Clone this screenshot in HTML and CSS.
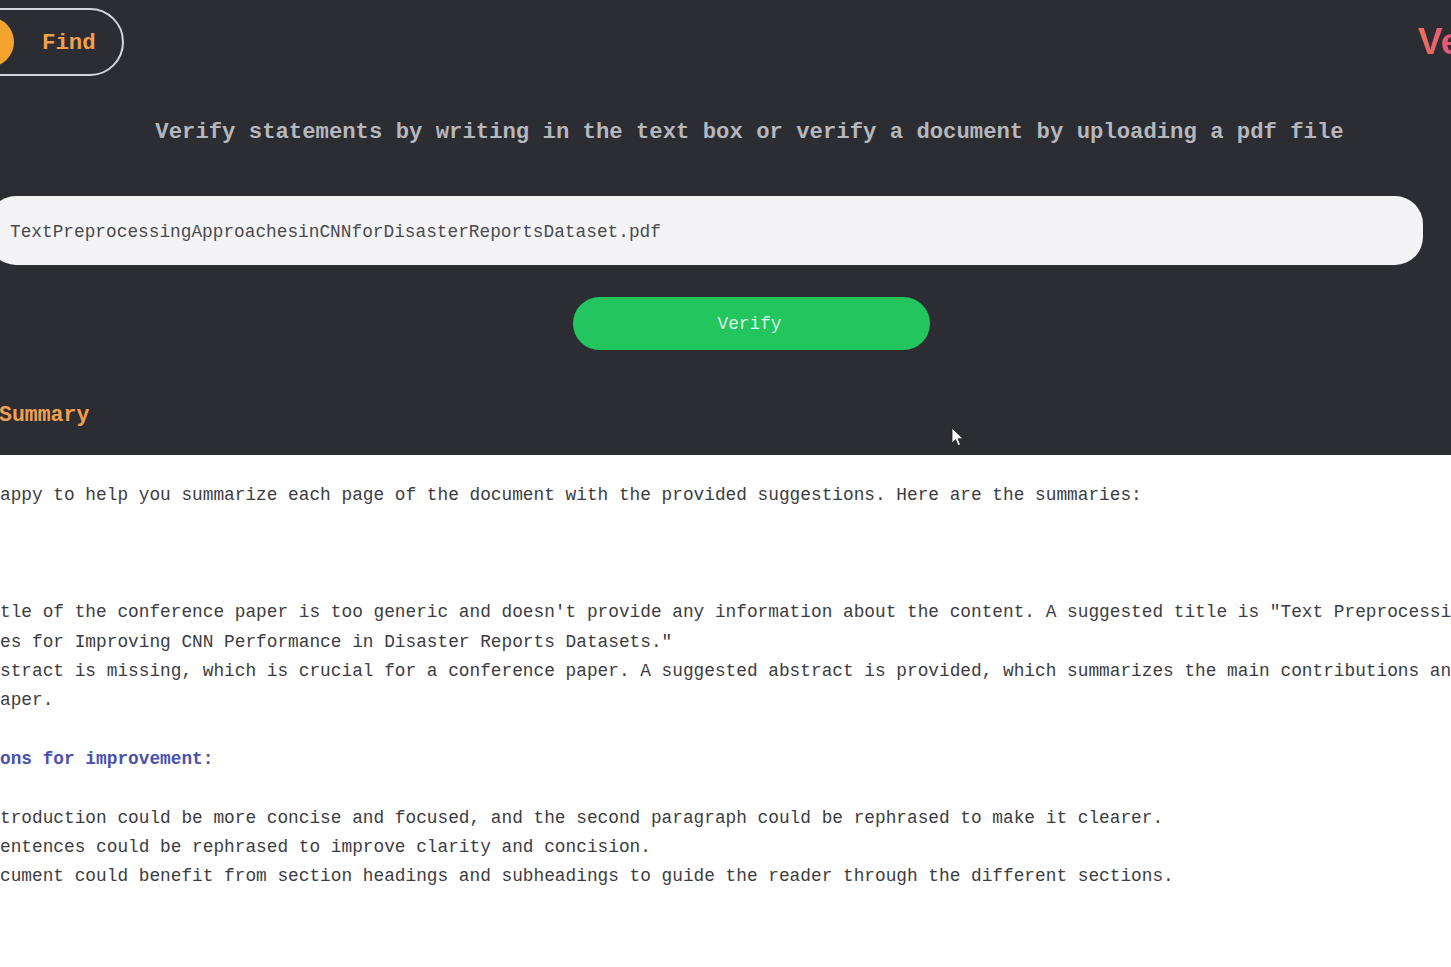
FILE: index.html
```
<!DOCTYPE html>
<html lang="en">
<head>
<meta charset="utf-8">
<title>Verify</title>
<link rel="stylesheet" href="styles.css">
</head>
<body>
<div class="page">
  <section class="dark">
    <header class="topbar">
      <div class="find-pill">
        <span class="find-dot"></span>
        <span class="find-label">Find</span>
      </div>
      <div class="brand">Ve</div>
    </header>
    <h1 class="title">Verify statements by writing in the text box or verify a document by uploading a pdf file</h1>
    <div class="file-box">TextPreprocessingApproachesinCNNforDisasterReportsDataset.pdf</div>
    <div class="action-row"><button class="verify-btn">Verify</button></div>
    <h2 class="summary-head">Summary</h2>
  </section>
  <section class="result">
    <p class="line">appy to help you summarize each page of the document with the provided suggestions. Here are the summaries:</p>
    <p class="line gap-3">tle of the conference paper is too generic and doesn't provide any information about the content. A suggested title is "Text Preprocessi</p>
    <p class="line">es for Improving CNN Performance in Disaster Reports Datasets."</p>
    <p class="line">stract is missing, which is crucial for a conference paper. A suggested abstract is provided, which summarizes the main contributions an</p>
    <p class="line">aper.</p>
    <p class="line gap-1 accent">ons for improvement:</p>
    <p class="line gap-1">troduction could be more concise and focused, and the second paragraph could be rephrased to make it clearer.</p>
    <p class="line">entences could be rephrased to improve clarity and concision.</p>
    <p class="line">cument could benefit from section headings and subheadings to guide the reader through the different sections.</p>
  </section>
  <svg class="cursor" width="14" height="20" viewBox="0 0 14 20" aria-hidden="true">
    <path d="M1 1v15l3.6-3.4 2.5 6 2.4-1-2.5-5.8H12z" fill="#fff" stroke="#222" stroke-width="0.8"/>
  </svg>
</div>
</body>
</html>
```
FILE: styles.css
```
* { box-sizing: border-box; }
html, body { margin: 0; padding: 0; }
body { background: #fff; font-family: "Liberation Mono", monospace; }
.page { position: relative; width: 1451px; height: 967px; overflow: hidden; background: #fff; }
.dark { height: 455px; background: #2c2d33; padding-top: 8px; }
.topbar { display: flex; justify-content: space-between; align-items: center; height: 68px; }
.find-pill {
  display: flex; align-items: center; gap: 28px;
  width: 164px; height: 68px; margin-left: -40px; padding-left: 2px;
  border: 2px solid #d4d4da; border-radius: 34px;
}
.find-dot { flex: none; width: 50px; height: 50px; border-radius: 50%; background: #f5a32f; }
.find-label { font-size: 22.4px; line-height: 28px; padding-top: 2px; font-weight: 700; color: #f3a04a; }
.brand {
  flex: none; width: 33px; overflow: hidden; white-space: nowrap;
  font-family: "Liberation Sans", sans-serif; font-size: 37px; font-weight: 700; line-height: 68px;
  background: linear-gradient(90deg, #f0705a 0, #e0507e 40px);
  -webkit-background-clip: text; background-clip: text; color: transparent;
}
.title {
  margin: 43px 0 0 -28px; width: 1555px; text-align: center;
  font-size: 22.26px; line-height: 26px; font-weight: 700; color: #b6b7bd;
  white-space: nowrap;
}
.file-box {
  margin: 51px 0 0 -12px; width: 1435px; height: 69px; padding: 3px 0 0 22px;
  display: flex; align-items: center;
  background: #f4f4f6; border-radius: 28px;
  font-size: 17.8px; color: #4a4a4e;
}
.action-row { display: flex; margin-top: 32px; padding-left: 573px; }
.verify-btn {
  width: 357px; height: 53px; border: 0; padding: 0 4px 0 0; border-radius: 27px; background: #22c55e;
  font-family: "Liberation Mono", monospace; font-size: 17.8px; color: #d8f5e2;
}
.summary-head {
  margin: 52px 0 0 -1px; font-size: 21.5px; line-height: 26px; font-weight: 700; color: #f0a050;
}
.result { padding-top: 26px; }
.line {
  margin: 0; height: 29.33px; line-height: 29.33px; white-space: nowrap;
  font-size: 17.8px; color: #3c3c40;
}
.gap-1 { margin-top: 29.33px; }
.gap-3 { margin-top: 88px; }
.accent { font-weight: 700; color: #4a50b0; }
.cursor { position: absolute; left: 951px; top: 427px; }
```
